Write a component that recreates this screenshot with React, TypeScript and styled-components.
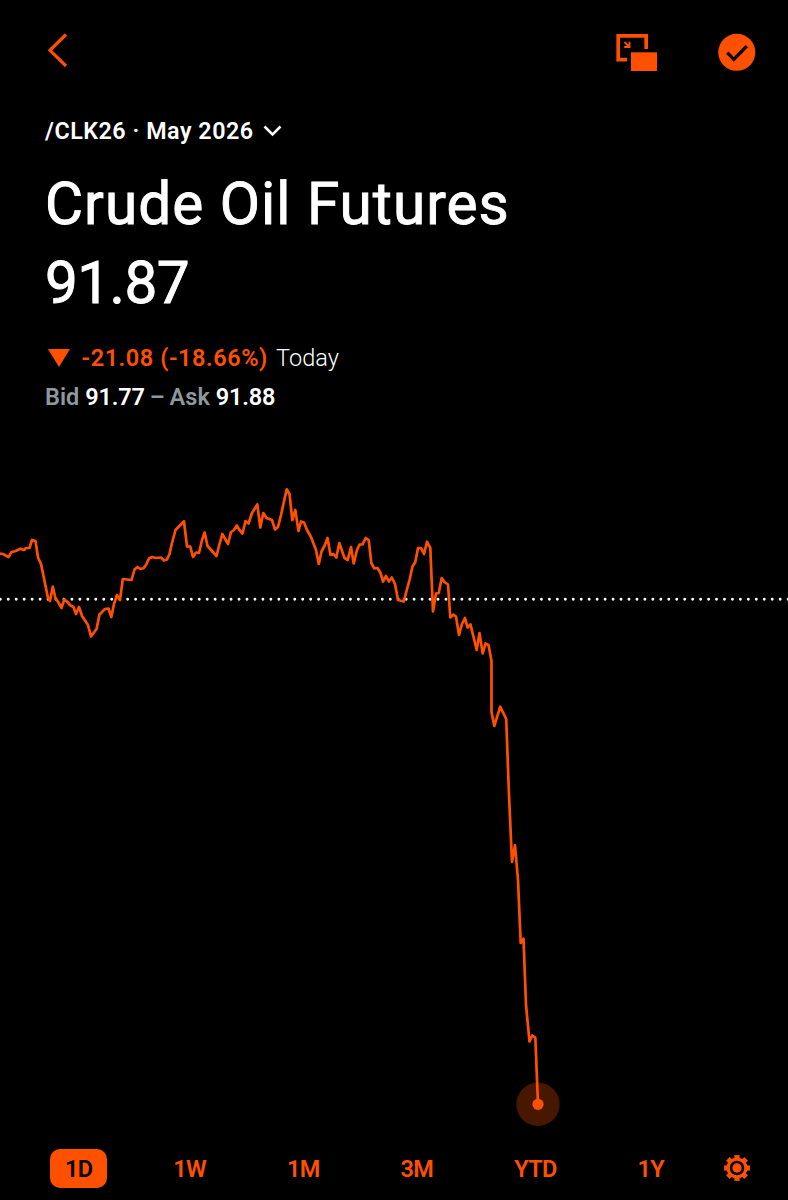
import React from 'react';
import styled, { createGlobalStyle } from 'styled-components';

const ORANGE = '#ff5000';

const GlobalStyle = createGlobalStyle`
  html, body { margin: 0; background: #000; }
  * { box-sizing: border-box; }
`;

const Screen = styled.main`
  display: flex;
  flex-direction: column;
  width: 788px;
  height: 1200px;
  overflow: hidden;
  background: #000;
  color: #fff;
  font-family: Roboto, 'Liberation Sans', sans-serif;
`;

const IconButton = styled.button`
  display: flex;
  padding: 0;
  border: 0;
  background: none;
  color: ${ORANGE};
`;

const TopBar = styled.header`
  display: flex;
  align-items: center;
  height: 104px;
  padding: 0 32px 0 47px;
`;

const BackButton = styled(IconButton)`
  margin-bottom: 4px;
`;

const Actions = styled.div`
  display: flex;
  align-items: center;
  gap: 60px;
  margin-left: auto;
`;

const Summary = styled.section`
  display: flex;
  flex-direction: column;
  height: 336px;
  padding: 0 45px;
`;

const Contract = styled.div`
  display: flex;
  align-items: center;
  gap: 9px;
  height: 54px;
  font-size: 23.3px;
  font-weight: 600;
  letter-spacing: 0.52px;
  white-space: pre;
`;

const Headline = styled.div<{ $spacing: number }>`
  height: 79px;
  font-size: 58.5px;
  line-height: 92px;
  letter-spacing: ${(p) => p.$spacing}px;
  -webkit-text-stroke: 0.9px #fff;
  white-space: pre;
`;

const ChangeRow = styled.div`
  display: flex;
  align-items: center;
  height: 38px;
  margin-top: 23px;
  padding-left: 3px;
  font-size: 23.5px;
`;

const Change = styled.span`
  margin: 0 8px 0 11.5px;
  color: ${ORANGE};
  font-weight: 600;
  letter-spacing: 0.55px;
`;

const Period = styled.span`
  font-weight: 300;
  letter-spacing: 0.1px;
`;

const Quote = styled.div`
  display: flex;
  align-items: center;
  gap: 6px;
  height: 39px;
  font-size: 23.5px;
  font-weight: 600;
`;

const Label = styled.span`
  color: #8f989d;
`;

const Dash = styled(Label)`
  margin: 0 -1px;
`;

const Price = styled.span`
  font-weight: 600;
  letter-spacing: -0.2px;
`;

const Chart = styled.svg`
  display: block;
  flex: none;
`;

const Ranges = styled.nav`
  display: flex;
  align-items: center;
  justify-content: space-between;
  height: 56px;
  padding: 0 38px 0 50px;
`;

const Range = styled.button<{ $active?: boolean }>`
  height: 39px;
  padding: 1px 15px 0;
  border: 0;
  border-radius: 10px;
  background: ${(p) => (p.$active ? ORANGE : 'transparent')};
  color: ${(p) => (p.$active ? '#000' : ORANGE)};
  font: 600 23.5px/38px Roboto, 'Liberation Sans', sans-serif;
  letter-spacing: -0.7px;
`;

const SettingsButton = styled(IconButton)`
  margin-left: -6px;
`;

const prices: [number, number][] = [
  [0, 553.7], [3, 554], [8.5, 557], [11.5, 552], [15, 551.3], [20.5, 548.7], [24, 550], [26, 548], [29.5, 548],
  [32, 540], [35.5, 541], [38, 557.5], [41, 564], [48, 598], [50, 601], [52.8, 586.5], [55.5, 598.5], [58.5, 602.5],
  [61.5, 608], [64.3, 599.5], [67, 601.5], [70.5, 605.5], [73.5, 607], [76, 614], [79, 607], [82, 616], [88, 625],
  [91, 636.5], [96.5, 629], [99.5, 614.5], [105, 609], [108.5, 608.5], [111.3, 617], [114, 604], [117, 595],
  [120, 600], [122.8, 579], [131.5, 580], [134.5, 569.5], [137.5, 567], [140.5, 569], [143.5, 568.3], [146, 565],
  [149, 558.5], [152, 557], [156, 558], [161, 557.5], [164, 560.5], [167, 559.5], [169.5, 554], [172, 543],
  [175.5, 530], [184, 521.3], [187, 546.5], [190.3, 546.5], [193, 557], [196, 552.5], [199, 553], [202, 540],
  [204.7, 532.5], [207.5, 546], [212, 551], [216.5, 556], [219.5, 544], [222.3, 534], [228, 544], [231, 532],
  [234, 530], [236.8, 525.5], [239.5, 530], [242.5, 533.5], [245.5, 521], [248.5, 523.5], [252, 513], [257.3, 504.5],
  [260.3, 527.5], [263.3, 513], [266.5, 518], [272, 520], [275, 529.5], [278, 527], [281, 515], [286.7, 489.3],
  [289.5, 494], [292.3, 520], [295.3, 510], [298.5, 531], [301, 521.5], [304, 522.5], [307, 530], [311, 537],
  [316, 550], [318.8, 564], [321.5, 551.5], [324.5, 546], [327.5, 538], [330.5, 555], [333.5, 554], [336.3, 557.5],
  [339.3, 543], [344.5, 558], [347.7, 560], [351, 547], [353.7, 563.5], [357, 550], [359.5, 544.5], [362.5, 544.5],
  [365.7, 538], [368.7, 540], [371.3, 563], [374.3, 568.5], [377.5, 568], [380.5, 573], [383, 581.5], [386, 576],
  [388.8, 581.5], [391.8, 577.5], [395, 584], [398, 600], [403.7, 601.5], [409.5, 580], [412.5, 566.5], [415.3, 562],
  [418, 548], [421, 548], [424, 554], [427, 541.7], [430.3, 548], [433, 611.5], [436, 593.5], [438.7, 593],
  [441.7, 578], [444.5, 582], [448, 584.5], [450.3, 617.5], [453.3, 614.7], [456, 616.5], [459, 635], [462, 624],
  [465, 618], [467.5, 627.5], [470.5, 624.5], [476.7, 650], [479.5, 633], [482.7, 653.5], [485.5, 643.5],
  [488.5, 645], [491.5, 661], [491.5, 712], [494.3, 726], [500.2, 706.7], [506.2, 719], [509, 795], [512, 862],
  [515, 845], [518, 880], [520.7, 943], [523.5, 938.7], [526, 1005], [529.5, 1041.5], [532.3, 1035.5],
  [535.3, 1037.5], [538, 1104],
];

const CHART_TOP = 440;

const PriceChart = () => (
  <Chart width="788" height="700" viewBox={`0 ${CHART_TOP} 788 700`} fill="none">
    <line x1="0.3" y1="599.3" x2="792" y2="599.3" stroke="#fff" strokeWidth="2.9" strokeLinecap="round" strokeDasharray="0 7.958" />
    <circle cx="538" cy="1104.3" r="21.7" fill="#481700" />
    <polyline
      points={prices.map((p) => p.join(',')).join(' ')}
      stroke={ORANGE}
      strokeWidth="2.7"
      strokeLinejoin="round"
    />
    <circle cx="538" cy="1104.3" r="5.6" fill={ORANGE} />
  </Chart>
);

const BackIcon = () => (
  <svg width="22" height="36" viewBox="0 0 22 36" fill="none">
    <path d="M19 2.5 3 18.3 19 34" stroke="currentColor" strokeWidth="3.2" />
  </svg>
);

const PipIcon = () => (
  <svg width="42" height="38" viewBox="0 0 42 38" fill="none">
    <path d="M11 26.7H2.2V2.9H30.2V16" stroke="currentColor" strokeWidth="3.7" />
    <path d="M15 19.3H41V38H15Z" fill="currentColor" />
    <path d="m8.5 9 4.4 4.4M13.5 8.7V14H8.2" stroke="currentColor" strokeWidth="1.9" />
  </svg>
);

const CheckIcon = () => (
  <svg width="38" height="38" viewBox="0 0 38 38" fill="none">
    <circle cx="18.8" cy="19.3" r="18.5" fill="currentColor" />
    <path d="m9.3 19.6 6.5 6.7L28.8 13.1" stroke="#000" strokeWidth="3.3" />
  </svg>
);

const GearIcon = () => (
  <svg width="26" height="26" viewBox="-13 -13 26 26" fill="none">
    <circle r="8.9" stroke="currentColor" strokeWidth="3.2" />
    {[0, 45, 90, 135, 180, 225, 270, 315].map((a) => (
      <path key={a} d="M-2.6-9V-12.9H2.6V-9Z" fill="currentColor" transform={`rotate(${a})`} />
    ))}
    <circle r="4.7" fill="currentColor" />
  </svg>
);

export default function App() {
  return (
    <Screen>
      <GlobalStyle />
      <TopBar>
        <BackButton aria-label="Back"><BackIcon /></BackButton>
        <Actions>
          <IconButton aria-label="Picture in picture"><PipIcon /></IconButton>
          <IconButton aria-label="In watchlist"><CheckIcon /></IconButton>
        </Actions>
      </TopBar>
      <Summary>
        <Contract>
          <span>/CLK26 · May 2026</span>
          <svg width="19" height="12" viewBox="0 0 19 12" fill="none">
            <path d="m1.5 1.5 8 8 8-8" stroke="#fff" strokeWidth="2.5" />
          </svg>
        </Contract>
        <Headline $spacing={1}>Crude Oil Futures</Headline>
        <Headline $spacing={-0.6}>91.87</Headline>
        <ChangeRow>
          <svg width="22" height="18" viewBox="0 0 22 18"><path d="M0 0H22L11 18Z" fill={ORANGE} /></svg>
          <Change>-21.08 (-18.66%)</Change>
          <Period>Today</Period>
        </ChangeRow>
        <Quote>
          <Label>Bid</Label>
          <Price>91.77</Price>
          <Dash>–</Dash>
          <Label>Ask</Label>
          <Price>91.88</Price>
        </Quote>
      </Summary>
      <PriceChart />
      <Ranges>
        <Range $active>1D</Range>
        <Range>1W</Range>
        <Range>1M</Range>
        <Range>3M</Range>
        <Range>YTD</Range>
        <Range>1Y</Range>
        <SettingsButton aria-label="Chart settings"><GearIcon /></SettingsButton>
      </Ranges>
    </Screen>
  );
}
